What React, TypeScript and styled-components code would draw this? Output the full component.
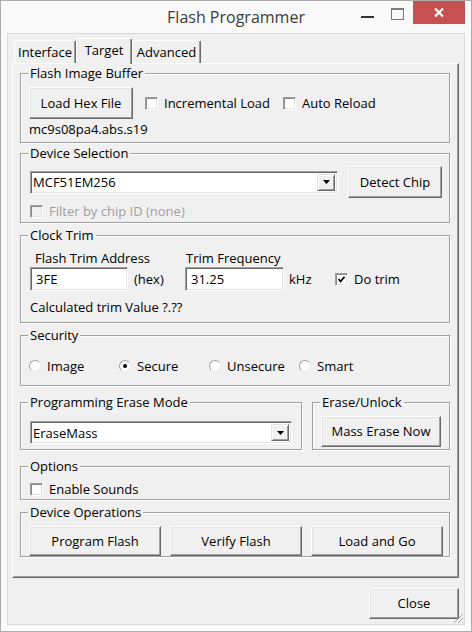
import React from "react";
import styled, { createGlobalStyle } from "styled-components";

const GlobalStyle = createGlobalStyle`
  html, body { margin: 0; padding: 0; }
  body {
    font-family: "Open Sans", "Noto Sans", sans-serif;
    font-size: 13px;
    color: #000;
  }
  * { box-sizing: border-box; }
`;

const Window = styled.div`
  width: 472px;
  height: 632px;
  border: 1px solid #adadad;
  background: #f9f9f9;
  display: flex;
  flex-direction: column;
`;

const TitleBar = styled.div`
  height: 32px;
  flex: none;
  display: grid;
  grid-template-columns: 1fr auto 1fr;
  align-items: center;
`;

const Title = styled.div`
  grid-column: 2;
  font-size: 16px;
  color: #3c3c3c;
  line-height: 20px;
`;

const Caption = styled.div`
  grid-column: 3;
  justify-self: end;
  align-self: start;
  display: flex;
  align-items: flex-start;
  margin-right: 6px;
`;

const MinGlyph = styled.div`
  width: 13px;
  height: 2px;
  background: #333;
  margin-top: 15px;
  margin-right: 17px;
`;

const MaxGlyph = styled.div`
  width: 13px;
  height: 12px;
  border: 1px solid #7a7a7a;
  border-top-width: 2px;
  margin-top: 7px;
  margin-right: 9px;
`;

const CloseCap = styled.div`
  width: 52px;
  height: 23px;
  background: #c75050;
  display: flex;
  align-items: center;
  justify-content: center;
`;

const Client = styled.div`
  flex: 1;
  min-height: 0;
  margin: 0 6px 6px 6px;
  background: #f0f0f0;
  border: 1px solid #dadada;
  padding: 4px 5px 5px 4px;
  display: flex;
  flex-direction: column;
  position: relative;
`;

const TabStrip = styled.div`
  display: flex;
  align-items: flex-end;
  height: 25px;
  padding-left: 2px;
  flex: none;
`;

const Tab = styled.div<{ $active?: boolean; $w: number }>`
  position: relative;
  z-index: ${(p) => (p.$active ? 2 : 1)};
  width: ${(p) => p.$w}px;
  height: ${(p) => (p.$active ? 26 : 23)}px;
  margin-bottom: ${(p) => (p.$active ? -1 : 0)}px;
  background: #f0f0f0;
  border-top: 1px solid #fff;
  border-left: 1px solid #fff;
  border-right: 1px solid #696969;
  border-radius: 2px 2px 0 0;
  box-shadow: inset -1px 0 0 #a0a0a0;
  display: flex;
  align-items: center;
  justify-content: center;
  padding-bottom: ${(p) => (p.$active ? 3 : 1)}px;
  line-height: 16px;
`;

const Panel = styled.div`
  flex: 1;
  min-height: 0;
  border: 1px solid;
  border-color: #fff #696969 #696969 #fff;
  box-shadow: inset -1px -1px 0 #a0a0a0;
  padding: 9px 8px 0 7px;
  display: flex;
  flex-direction: column;
`;

const Group = styled.div<{ $h: number; $mt?: number; $w?: number; $pad: string }>`
  position: relative;
  height: ${(p) => p.$h}px;
  margin-top: ${(p) => p.$mt ?? 0}px;
  ${(p) => (p.$w ? `width: ${p.$w}px; flex: none;` : "")}
  border: 1px solid #a0a0a0;
  box-shadow: 1px 1px 0 #fff, inset 1px 1px 0 #fff;
  padding: ${(p) => p.$pad};
`;

const Legend = styled.span`
  position: absolute;
  top: -9px;
  left: 7px;
  padding: 0 2px;
  background: #f0f0f0;
  line-height: 16px;
  white-space: nowrap;
`;

const Row = styled.div<{ $h?: number; $mt?: number; $gap?: number }>`
  display: flex;
  align-items: center;
  height: ${(p) => p.$h ?? 16}px;
  margin-top: ${(p) => p.$mt ?? 0}px;
  gap: ${(p) => p.$gap ?? 0}px;
`;

const SideBySide = styled.div`
  display: flex;
  gap: 10px;
  margin-top: 16px;
`;

const Btn = styled.button<{ $w: number; $h: number }>`
  width: ${(p) => p.$w}px;
  height: ${(p) => p.$h}px;
  flex: none;
  font-family: inherit;
  font-size: 13px;
  color: #000;
  background: #f0f0f0;
  border: 1px solid;
  border-color: #fff #696969 #696969 #fff;
  box-shadow: inset -1px -1px 0 #a0a0a0, inset 1px 1px 0 #e3e3e3;
  padding: 0 0 1px 0;
  line-height: 16px;
`;

const CheckLabel = styled.label<{ $w?: number; $ml?: number; $disabled?: boolean }>`
  display: flex;
  align-items: center;
  gap: 6px;
  height: 16px;
  line-height: 16px;
  ${(p) => (p.$w ? `width: ${p.$w}px;` : "")}
  margin-left: ${(p) => p.$ml ?? 0}px;
  color: ${(p) => (p.$disabled ? "#a0a0a0" : "#000")};
  white-space: nowrap;
`;

const CheckBox = styled.span<{ $disabled?: boolean }>`
  width: 13px;
  height: 13px;
  flex: none;
  background: ${(p) => (p.$disabled ? "#f0f0f0" : "#fff")};
  border: 1px solid;
  border-color: #a0a0a0 #fff #fff #a0a0a0;
  box-shadow: inset 1px 1px 0 #8a8a8a, inset -1px -1px 0 #e3e3e3;
  display: inline-flex;
  align-items: center;
  justify-content: center;
`;

const RadioLabel = styled.label`
  display: flex;
  align-items: center;
  gap: 6px;
  width: 90px;
  height: 16px;
  line-height: 16px;
`;

const RadioCircle = styled.span`
  width: 12px;
  height: 12px;
  flex: none;
  border-radius: 50%;
  background: #fff;
  border: 1px solid;
  border-color: #a0a0a0 #e8e8e8 #e8e8e8 #a0a0a0;
  display: inline-flex;
  align-items: center;
  justify-content: center;
`;

const RadioDot = styled.span`
  width: 4px;
  height: 4px;
  border-radius: 50%;
  background: #000;
`;

const Sunken = styled.div<{ $w: number; $h: number }>`
  width: ${(p) => p.$w}px;
  height: ${(p) => p.$h}px;
  flex: none;
  background: #fff;
  border: 1px solid;
  border-color: #a0a0a0 #fff #fff #a0a0a0;
  box-shadow: inset 1px 1px 0 #696969, inset -1px -1px 0 #e3e3e3;
  display: flex;
  align-items: stretch;
  padding: 2px;
`;

const FieldText = styled.span<{ $pl: number }>`
  flex: 1;
  display: flex;
  align-items: center;
  padding-left: ${(p) => p.$pl}px;
  line-height: 16px;
  white-space: nowrap;
`;

const DropBtn = styled.span`
  width: 18px;
  flex: none;
  background: #f0f0f0;
  border: 1px solid;
  border-color: #e3e3e3 #696969 #696969 #e3e3e3;
  box-shadow: inset 1px 1px 0 #fff, inset -1px -1px 0 #a0a0a0;
  display: flex;
  align-items: center;
  justify-content: center;
`;

const TrimGrid = styled.div`
  display: grid;
  grid-template-columns: 155px 150px auto;
  grid-template-rows: 16px 24px;
  row-gap: 1px;
  align-items: center;
`;

const FieldLabel = styled.span<{ $pl: number }>`
  padding-left: ${(p) => p.$pl}px;
  line-height: 16px;
`;

const Unit = styled.span<{ $ml: number }>`
  margin-left: ${(p) => p.$ml}px;
  line-height: 16px;
`;

const Line = styled.div<{ $mt: number }>`
  margin-top: ${(p) => p.$mt}px;
  line-height: 16px;
  height: 16px;
`;

const Footer = styled.div`
  flex: none;
  display: flex;
  justify-content: flex-end;
  margin-top: 10px;
`;

const Grip = styled.svg`
  position: absolute;
  right: 0;
  bottom: 0;
`;

const Check = () => (
  <svg width="9" height="9" viewBox="0 0 9 9">
    <path d="M1.5 4.2 L3.6 6.4 L7.6 1.8" fill="none" stroke="#000" strokeWidth="1.7" />
  </svg>
);

const Arrow = () => (
  <svg width="7" height="4" viewBox="0 0 7 4">
    <polygon points="0,0 7,0 3.5,4" fill="#000" />
  </svg>
);

const CheckItem = ({
  label,
  checked,
  disabled,
  w,
  ml,
}: {
  label: string;
  checked?: boolean;
  disabled?: boolean;
  w?: number;
  ml?: number;
}) => (
  <CheckLabel $w={w} $ml={ml} $disabled={disabled}>
    <CheckBox $disabled={disabled}>{checked && <Check />}</CheckBox>
    {label}
  </CheckLabel>
);

const Radio = ({ label, checked }: { label: string; checked?: boolean }) => (
  <RadioLabel>
    <RadioCircle>{checked && <RadioDot />}</RadioCircle>
    {label}
  </RadioLabel>
);

const Combo = ({ w, value }: { w: number; value: string }) => (
  <Sunken $w={w} $h={23}>
    <FieldText $pl={0}>{value}</FieldText>
    <DropBtn>
      <Arrow />
    </DropBtn>
  </Sunken>
);

const TextBox = ({ w, value }: { w: number; value: string }) => (
  <Sunken $w={w} $h={24}>
    <FieldText $pl={3}>{value}</FieldText>
  </Sunken>
);

export default function App() {
  return (
    <>
      <GlobalStyle />
      <Window>
        <TitleBar>
          <Title>Flash Programmer</Title>
          <Caption>
            <MinGlyph />
            <MaxGlyph />
            <CloseCap>
              <svg width="10" height="9" viewBox="0 0 10 9">
                <path d="M1 0.5 L9 8.5 M9 0.5 L1 8.5" stroke="#fff" strokeWidth="2.2" />
              </svg>
            </CloseCap>
          </Caption>
        </TitleBar>
        <Client>
          <TabStrip>
            <Tab $w={62}>Interface</Tab>
            <Tab $w={56} $active>
              Target
            </Tab>
            <Tab $w={69}>Advanced</Tab>
          </TabStrip>
          <Panel>
            <Group $h={70} $pad="13px 0 0 8px">
              <Legend>Flash Image Buffer</Legend>
              <Row $h={32}>
                <Btn $w={104} $h={32}>
                  Load Hex File
                </Btn>
                <CheckItem label="Incremental Load" w={138} ml={12} />
                <CheckItem label="Auto Reload" />
              </Row>
              <Line $mt={2}>mc9s08pa4.abs.s19</Line>
            </Group>

            <Group $h={70} $mt={10} $pad="12px 0 0 9px">
              <Legend>Device Selection</Legend>
              <Row $h={32} $gap={10}>
                <Combo w={308} value="MCF51EM256" />
                <Btn $w={94} $h={32}>
                  Detect Chip
                </Btn>
              </Row>
              <Row $mt={5}>
                <CheckItem label="Filter by chip ID (none)" disabled />
              </Row>
            </Group>

            <Group $h={88} $mt={12} $pad="14px 0 0 9px">
              <Legend>Clock Trim</Legend>
              <TrimGrid>
                <FieldLabel $pl={5}>Flash Trim Address</FieldLabel>
                <FieldLabel $pl={1}>Trim Frequency</FieldLabel>
                <span />
                <Row $h={24}>
                  <TextBox w={98} value="3FE" />
                  <Unit $ml={6}>(hex)</Unit>
                </Row>
                <Row $h={24}>
                  <TextBox w={99} value="31.25" />
                  <Unit $ml={5}>kHz</Unit>
                </Row>
                <CheckItem label="Do trim" checked />
              </TrimGrid>
              <Line $mt={8}>Calculated trim Value ?.??</Line>
            </Group>

            <Group $h={51} $mt={12} $pad="22px 0 0 8px">
              <Legend>Security</Legend>
              <Row>
                <Radio label="Image" />
                <Radio label="Secure" checked />
                <Radio label="Unsecure" />
                <Radio label="Smart" />
              </Row>
            </Group>

            <SideBySide>
              <Group $h={48} $w={282} $pad="18px 0 0 9px">
                <Legend>Programming Erase Mode</Legend>
                <Combo w={262} value="EraseMass" />
              </Group>
              <Group $h={48} $w={138} $pad="13px 0 0 8px">
                <Legend>Erase/Unlock</Legend>
                <Btn $w={120} $h={31}>
                  Mass Erase Now
                </Btn>
              </Group>
            </SideBySide>

            <Group $h={34} $mt={16} $pad="14px 0 0 9px">
              <Legend>Options</Legend>
              <CheckItem label="Enable Sounds" />
            </Group>

            <Group $h={45} $mt={12} $pad="13px 0 0 8px">
              <Legend>Device Operations</Legend>
              <Row $h={30} $gap={9}>
                <Btn $w={132} $h={30}>
                  Program Flash
                </Btn>
                <Btn $w={132} $h={30}>
                  Verify Flash
                </Btn>
                <Btn $w={132} $h={30}>
                  Load and Go
                </Btn>
              </Row>
            </Group>
          </Panel>
          <Footer>
            <Btn $w={90} $h={31}>
              Close
            </Btn>
          </Footer>
          <Grip width="13" height="13" viewBox="0 0 13 13">
            <path d="M12 3 L3 12 M12 7 L7 12 M12 11 L11 12" stroke="#a0a0a0" strokeWidth="1" />
            <path d="M12 4 L4 12 M12 8 L8 12" stroke="#fff" strokeWidth="1" />
          </Grip>
        </Client>
      </Window>
    </>
  );
}
